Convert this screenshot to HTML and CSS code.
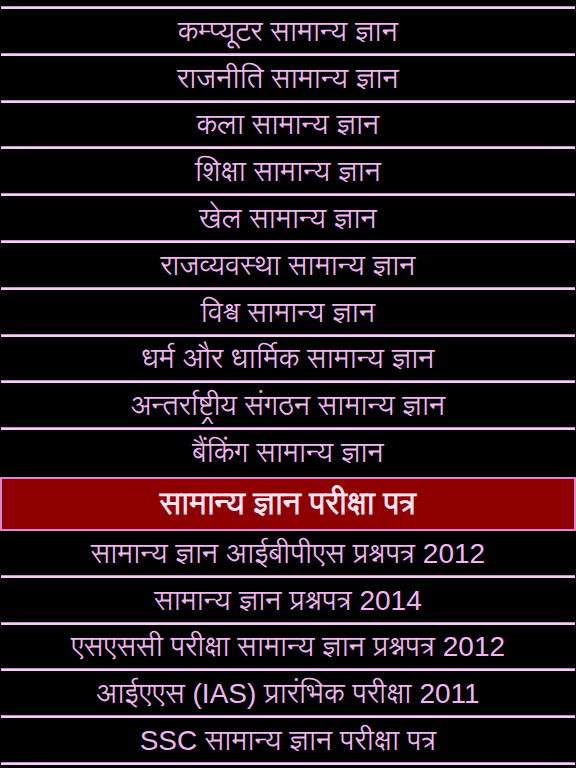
FILE: index.html
```html
<!DOCTYPE html>
<html lang="hi">
<head>
<meta charset="utf-8">
<title>सामान्य ज्ञान</title>
<link rel="stylesheet" href="styles.css">
</head>
<body>
<div class="list">
  <div class="sep"></div><div class="row">कम्प्यूटर सामान्य ज्ञान</div>
  <div class="sep"></div><div class="row">राजनीति सामान्य ज्ञान</div>
  <div class="sep"></div><div class="row">कला सामान्य ज्ञान</div>
  <div class="sep"></div><div class="row">शिक्षा सामान्य ज्ञान</div>
  <div class="sep"></div><div class="row">खेल सामान्य ज्ञान</div>
  <div class="sep"></div><div class="row">राजव्यवस्था सामान्य ज्ञान</div>
  <div class="sep"></div><div class="row">विश्व सामान्य ज्ञान</div>
  <div class="sep"></div><div class="row">धर्म और धार्मिक सामान्य ज्ञान</div>
  <div class="sep"></div><div class="row">अन्तर्राष्ट्रीय संगठन सामान्य ज्ञान</div>
  <div class="sep"></div><div class="row">बैंकिंग सामान्य ज्ञान</div>
  <div class="header">सामान्य ज्ञान परीक्षा पत्र</div>
  <div class="row">सामान्य ज्ञान आईबीपीएस प्रश्नपत्र 2012</div>
  <div class="sep"></div><div class="row">सामान्य ज्ञान प्रश्नपत्र 2014</div>
  <div class="sep"></div><div class="row">एसएससी परीक्षा सामान्य ज्ञान प्रश्नपत्र 2012</div>
  <div class="sep"></div><div class="row">आईएएस (IAS) प्रारंभिक परीक्षा 2011</div>
  <div class="sep"></div><div class="row">SSC सामान्य ज्ञान परीक्षा पत्र</div>
  <div class="sep"></div>
</div>
</body>
</html>
```
FILE: styles.css
```css
html, body {
  margin: 0;
  padding: 0;
  background: #000;
  height: 100%;
  overflow: hidden;
}
.list {
  display: flex;
  flex-direction: column;
  padding-top: 6px;
  font-family: "Liberation Sans", "Lohit Devanagari", "Noto Sans Devanagari", "Noto Sans", sans-serif;
}
.sep {
  height: 2px;
  margin: 0 1px;
  background: #f4cff4;
  border-top: 1px solid #c890c8;
}
.row {
  height: 43.8px;
  display: flex;
  align-items: center;
  justify-content: center;
  color: #f0b6f0;
  font-size: 28px;
  line-height: 1;
  padding-top: 2px;
  box-sizing: border-box;
  white-space: nowrap;
}
.header {
  margin-top: 3px;
  height: 50px;
  box-sizing: content-box;
  border: 2px solid #d68ad6;
  background: #8e0000;
  display: flex;
  align-items: center;
  justify-content: center;
  color: #fbe3f2;
  font-size: 31px;
  line-height: 1;
  font-weight: bold;
  white-space: nowrap;
}
```
